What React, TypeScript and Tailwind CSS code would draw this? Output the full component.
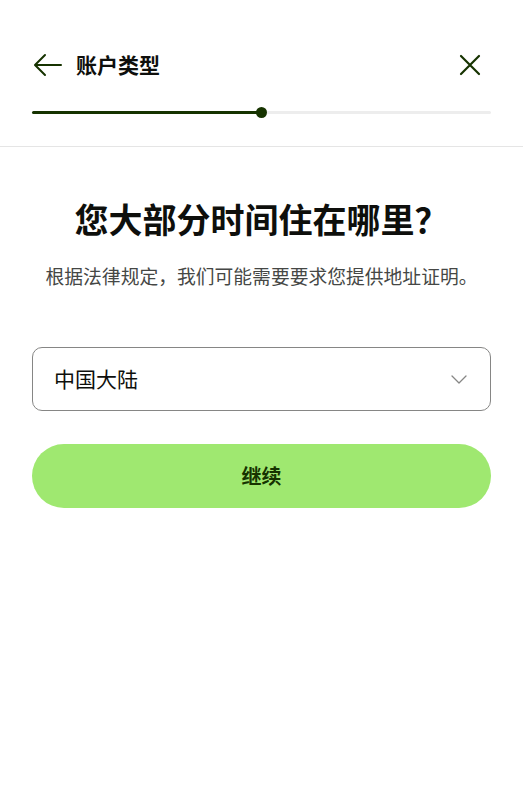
import React from "react";

export default function App() {
  const font = { fontFamily: '"Noto Sans CJK SC", "Noto Sans", sans-serif' };
  return (
    <div className="w-[523px] h-[800px] bg-white" style={font}>
      <div className="px-8 pt-[46px]">
        <div className="flex items-center justify-between h-[38px]">
          <div className="flex items-center gap-[12px]">
            <svg width="32" height="32" viewBox="0 0 32 32" fill="none" stroke="#163300" strokeWidth="2" strokeLinecap="round" strokeLinejoin="round">
              <path d="M29 16H4" />
              <path d="M13 6L3 16l10 10" />
            </svg>
            <span className="text-[21px] font-bold text-[#0e0f0c]">账户类型</span>
          </div>
          <svg width="24" height="24" viewBox="0 0 24 24" fill="none" stroke="#163300" strokeWidth="2.2" strokeLinecap="round" className="mr-[9px]">
            <path d="M3 3l18 18M21 3L3 21" />
          </svg>
        </div>
        <div className="relative mt-[27px] h-[3px] bg-[#ededed] rounded-full">
          <div className="absolute left-0 top-0 h-[3px] w-[229px] bg-[#163300] rounded-full" />
          <div className="absolute left-[224px] top-[-4px] w-[11px] h-[11px] rounded-full bg-[#163300]" />
        </div>
      </div>
      <div className="mt-[32px] h-px bg-[#e5e5e5]" />
      <div className="px-8">
        <h1 className="mt-[50px] text-center text-[34px] leading-[44px] font-bold text-[#0e0f0c]">您大部分时间住在哪里？</h1>
        <p className="mt-[20px] text-center text-[18.8px] leading-[30px] text-[#454745]">根据法律规定，我们可能需要要求您提供地址证明。</p>
        <div className="mt-[56px] h-[64px] rounded-[10px] border border-[#868685] flex items-center justify-between pl-[21px] pr-[22px]">
          <span className="text-[21px] text-[#0e0f0c]">中国大陆</span>
          <svg width="18" height="18" viewBox="0 0 18 18" fill="none" stroke="#868685" strokeWidth="1.3" strokeLinecap="round" strokeLinejoin="round">
            <path d="M2 6l7 7 7-7" />
          </svg>
        </div>
        <button className="mt-[33px] w-full h-[64px] rounded-full bg-[#9fe870] flex items-center justify-center">
          <span className="text-[20px] font-bold text-[#163300]">继续</span>
        </button>
      </div>
    </div>
  );
}
